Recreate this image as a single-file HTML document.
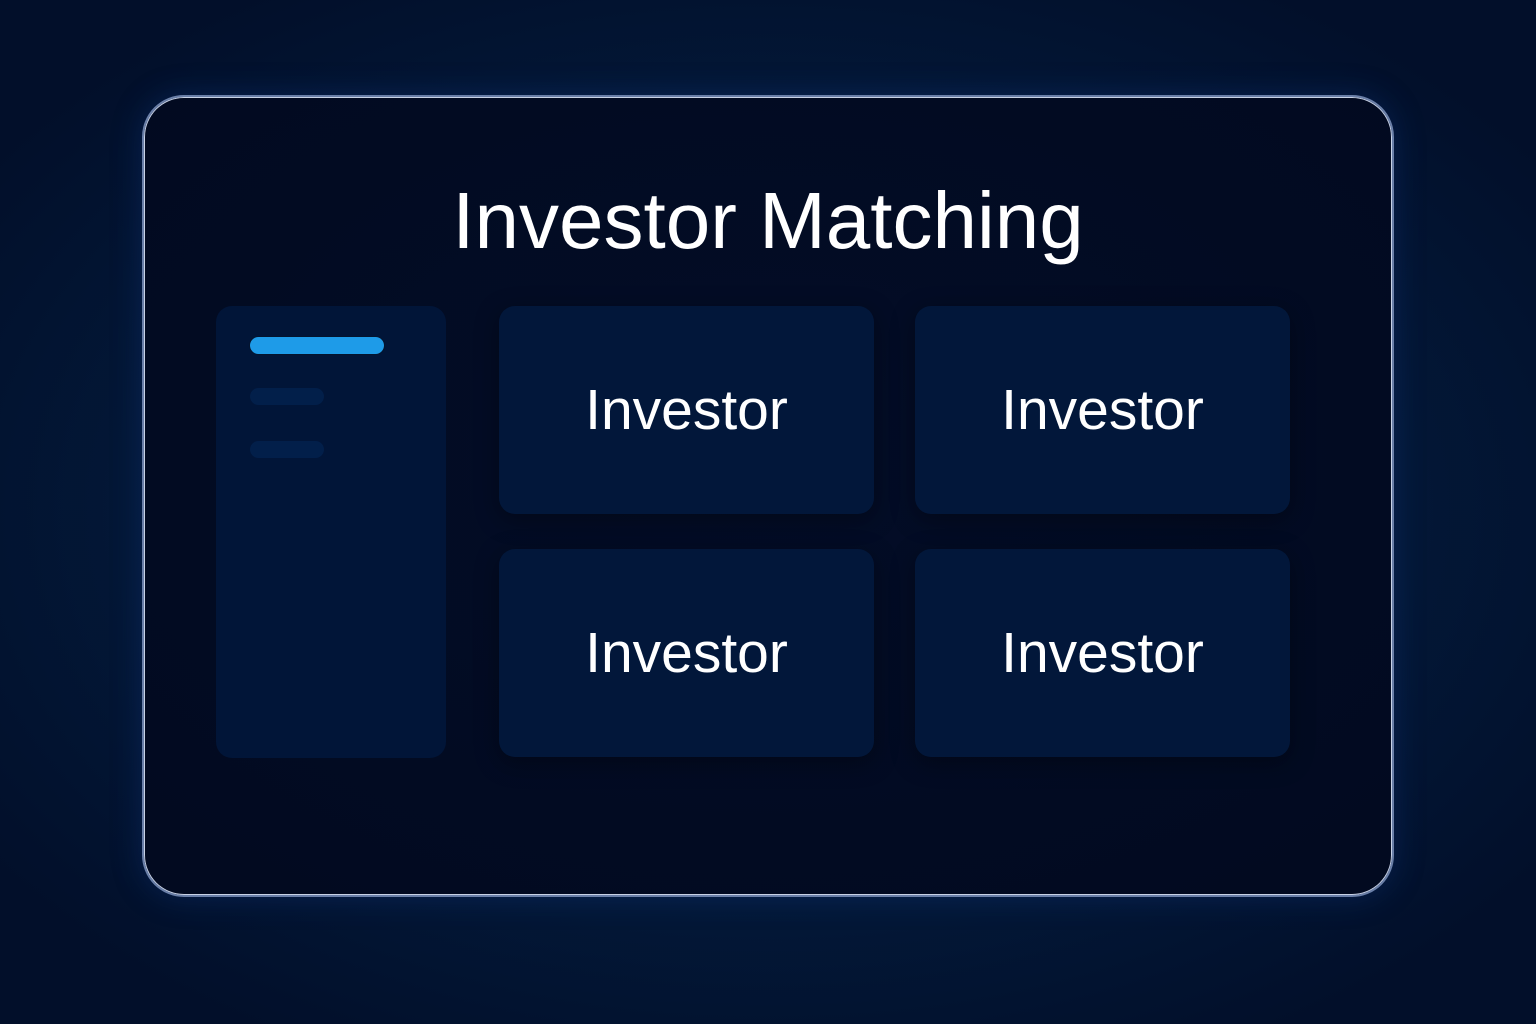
<!DOCTYPE html>
<html><head><style>
html,body{margin:0;padding:0}
body{width:1536px;height:1024px;overflow:hidden;position:relative;font-family:"Liberation Sans",sans-serif;
background:radial-gradient(ellipse 62% 60% at 50% 50%,#05224f 0%,#031939 60%,#020f2a 100%);}
.frame{position:absolute;left:142px;top:95px;width:1248px;height:798px;border-radius:42px;
border:2px solid #6a7fa8;box-shadow:inset 0 0 0 1px #c8d2e6,0 0 30px rgba(20,60,140,.35);
background:radial-gradient(ellipse 70% 70% at 50% 45%,#030d27 0%,#020a20 100%);}
.title{position:absolute;left:0;width:1536px;top:176px;text-align:center;color:#fff;font-size:80px;line-height:90px;}
.side{position:absolute;left:216px;top:306px;width:230px;height:452px;border-radius:16px;background:#011538;}
.bar{position:absolute;left:250px;height:17px;border-radius:9px}
.card{position:absolute;width:375px;height:208px;border-radius:16px;background:#02173a;color:#fff;font-size:57px;
display:flex;align-items:center;justify-content:center;box-shadow:0 6px 24px rgba(0,0,0,.35)}
</style></head><body>
<div class="frame"></div>
<div class="title">Investor Matching</div>
<div class="side"></div>
<div class="bar" style="top:337px;width:134px;background:#1e9be8;box-shadow:0 0 0 1px #04142e"></div>
<div class="bar" style="top:388px;width:74px;background:#021f4a"></div>
<div class="bar" style="top:441px;width:74px;background:#021f4a"></div>
<div class="card" style="left:499px;top:306px">Investor</div>
<div class="card" style="left:915px;top:306px">Investor</div>
<div class="card" style="left:499px;top:549px">Investor</div>
<div class="card" style="left:915px;top:549px">Investor</div>
</body></html>
